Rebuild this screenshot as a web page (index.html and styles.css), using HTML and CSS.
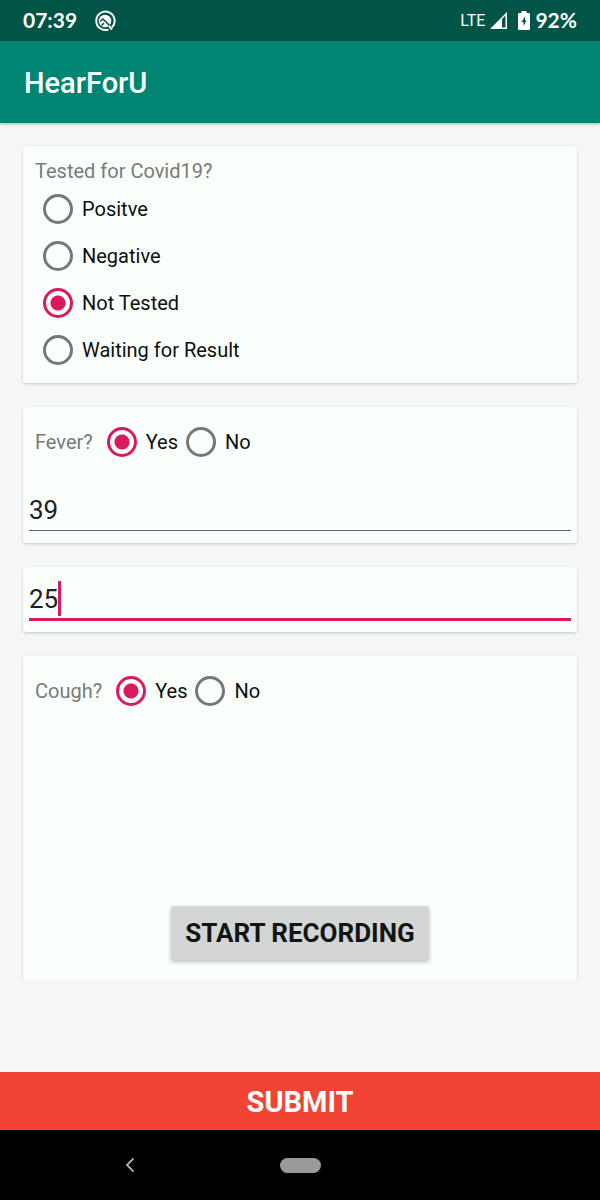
FILE: index.html
```html
<!DOCTYPE html>
<html lang="en">
<head>
<meta charset="utf-8">
<meta name="viewport" content="width=device-width, initial-scale=1">
<title>HearForU</title>
<link rel="stylesheet" href="styles.css">
</head>
<body>
<div class="status-bar">
  <span class="clock">07:39</span>
  <svg class="status-icon" width="22" height="22" viewBox="0 0 22 22" aria-hidden="true">
    <path d="M18 17.300A9.200 9.200 0 1 0 14.500 19.500" fill="none" stroke="#fff" stroke-width="2"/>
    <circle cx="11" cy="11" r="6.200" fill="#fff"/>
    <path d="M6 11.500 9 9 16 16" fill="none" stroke="#005546" stroke-width="1.500"/>
    <path d="M7.500 15.500 10 13" fill="none" stroke="#005546" stroke-width="1.500"/>
    <path d="M15 16 18 19.500" fill="none" stroke="#fff" stroke-width="2"/>
  </svg>
  <span class="network">LTE</span>
  <svg class="signal" width="18" height="18" viewBox="0 0 18 18" aria-hidden="true">
    <path d="M0 17 17 0V17Z" fill="#fff"/>
    <path d="M12 7 15.500 3.500V15.500H12Z" fill="#005546"/>
  </svg>
  <svg class="battery" width="12" height="20" viewBox="0 0 12 20" aria-hidden="true">
    <path d="M1 2H3.500V0H8.500V2H11Q12 2 12 3V18Q12 19 11 19H1Q0 19 0 18V3Q0 2 1 2Z" fill="#fff"/>
    <path d="M7 5.500 3.500 11H5.500V15L8.500 9.500H7Z" fill="#005546"/>
  </svg>
  <span class="charge">92%</span>
</div>
<header class="app-bar"><h1 class="app-title">HearForU</h1></header>
<form class="survey">
  <div class="cards">
    <fieldset class="card card-test">
      <legend class="question question-top">Tested for Covid19?</legend>
      <label class="option option-row"><input class="radio" type="radio" name="test">Positve</label>
      <label class="option option-row"><input class="radio" type="radio" name="test">Negative</label>
      <label class="option option-row"><input class="radio" type="radio" name="test" checked>Not Tested</label>
      <label class="option option-row"><input class="radio" type="radio" name="test">Waiting for Result</label>
    </fieldset>
    <section class="card card-fever">
      <div class="inline-group" role="radiogroup" aria-labelledby="fever">
        <span class="question" id="fever">Fever?</span>
        <label class="option"><input class="radio" type="radio" name="fever" checked>Yes</label>
        <label class="option"><input class="radio" type="radio" name="fever">No</label>
      </div>
      <input class="field" type="text" inputmode="numeric" value="39" aria-label="Temperature">
    </section>
    <section class="card card-age">
      <input class="field field-active" type="text" inputmode="numeric" value="25" aria-label="Age">
      <span class="caret" aria-hidden="true"></span>
    </section>
    <section class="card card-cough">
      <div class="inline-group" role="radiogroup" aria-labelledby="cough">
        <span class="question" id="cough">Cough?</span>
        <label class="option"><input class="radio" type="radio" name="cough" checked>Yes</label>
        <label class="option"><input class="radio" type="radio" name="cough">No</label>
      </div>
      <button class="record" type="button">START RECORDING</button>
    </section>
  </div>
  <button class="submit" type="button">SUBMIT</button>
</form>
<nav class="nav-bar">
  <button class="nav-button" type="button" aria-label="Back">
    <svg width="10" height="16" viewBox="0 0 10 16" aria-hidden="true"><path d="M8.500 1.500 2 8 8.500 14.500" fill="none" stroke="#b0b0ae" stroke-width="1.800"/></svg>
  </button>
  <button class="nav-button" type="button" aria-label="Home"><span class="pill"></span></button>
</nav>
</body>
</html>
```
FILE: styles.css
```css
* { box-sizing: border-box; }

body {
  margin: 0;
  min-height: 100vh;
  display: flex;
  flex-direction: column;
  background: #f4f7f5;
  color: #0c0f0e;
  font-family: Roboto, "Liberation Sans", sans-serif;
  font-size: 20px;
}

button, input { font-family: inherit; }

.status-bar {
  display: flex;
  align-items: center;
  height: 41px;
  padding: 0 23px;
  background: #005546;
  color: #fff;
}
.clock, .charge {
  padding-bottom: 2px;
  font-family: Lato, sans-serif;
  font-size: 21px;
  font-weight: 700;
  line-height: 22px;
}
.status-icon { margin-left: 17px; }
.network { margin-left: auto; font-size: 16px; }
.signal { margin-left: 5px; }
.battery { margin: 0 5px 0 10px; }

.app-bar {
  display: flex;
  align-items: center;
  height: 82px;
  padding: 2px 24px 0;
  background: #008573;
  box-shadow: 0 1px 3px rgba(0, 60, 50, 0.35);
}
.app-title { margin: 0; color: #fff; font-size: 29px; font-weight: 500; }

.survey { flex: 1; display: flex; flex-direction: column; }
.cards {
  display: flex;
  flex-direction: column;
  gap: 24px;
  padding: 23px 23px 0;
  overflow: hidden;
}
.card {
  margin: 0;
  border: 0;
  border-radius: 3px;
  background: #fbfffc;
  box-shadow: 0 1px 3px rgba(0, 0, 0, 0.2);
}
.card-test { display: flex; flex-direction: column; padding: 12px 12px 10px 20px; }
.question { color: #777b79; }
.question-top { float: left; margin-left: -8px; padding: 0; line-height: 27px; }
.option { display: flex; align-items: center; gap: 9px; }
.option-row { height: 47px; }

.radio {
  appearance: none;
  flex: none;
  width: 30px;
  height: 30px;
  margin: 0;
  border: 3px solid #747876;
  border-radius: 50%;
}
.radio:checked {
  border-color: #d81b60;
  background: radial-gradient(circle, #d81b60 7px, transparent 8px);
}

.inline-group { display: flex; align-items: center; gap: 8px; height: 46px; }
.inline-group .question { margin-right: 6px; }

.card-fever { padding: 12px 6px; }
.card-fever .inline-group, .card-cough .inline-group { padding-left: 6px; }
.field {
  display: block;
  width: 100%;
  height: 42px;
  padding: 0;
  border: 0;
  border-bottom: 1px solid #5f6361;
  border-radius: 0;
  outline: 0;
  background: transparent;
  color: #1d201f;
  font-size: 26px;
}
.card-fever .field { margin-top: 24px; }
.card-age { position: relative; padding: 12px 6px 11px; }
.field-active { border-bottom: 3px solid #d81b60; }
.caret { position: absolute; left: 35px; top: 14px; width: 3px; height: 35px; background: #d81b60; }

.card-cough {
  display: flex;
  flex-direction: column;
  min-height: 323px;
  padding: 12px 6px 19px;
  border-radius: 3px 3px 0 0;
}
.record {
  align-self: center;
  margin-top: auto;
  height: 54px;
  padding: 0 14px;
  border: 0;
  border-radius: 3px;
  background: #d3d6d4;
  box-shadow: 0 2px 4px rgba(0, 0, 0, 0.25);
  color: #111614;
  font-size: 26px;
  font-weight: 700;
}
.submit {
  margin-top: auto;
  height: 58px;
  padding: 2px 0 0;
  border: 0;
  background: #f24435;
  color: #fff;
  font-size: 29px;
  font-weight: 700;
}

.nav-bar {
  display: grid;
  grid-template-columns: 1fr auto 1fr;
  align-items: center;
  height: 70px;
  background: #000;
}
.nav-button {
  display: flex;
  justify-self: center;
  padding: 8px 20px;
  border: 0;
  background: none;
}
.pill { width: 41px; height: 15px; border-radius: 8px; background: #999b99; }
```
